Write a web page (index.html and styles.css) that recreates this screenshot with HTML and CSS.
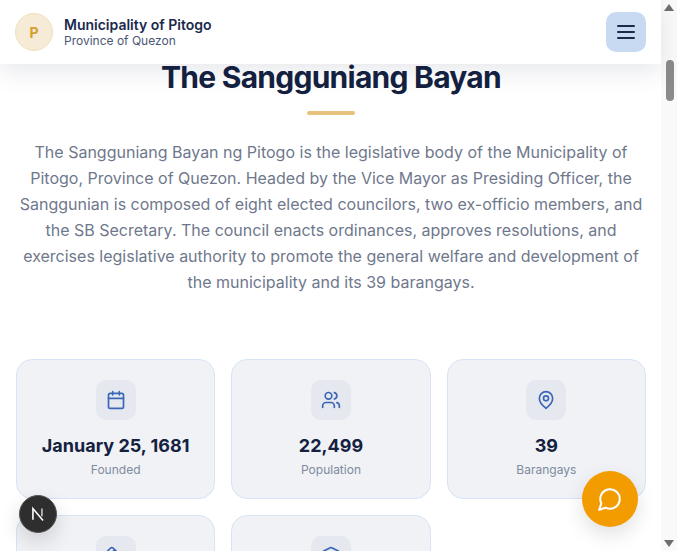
FILE: index.html
```html
<!DOCTYPE html>
<html lang="en">
<head>
<meta charset="utf-8">
<title>Municipality of Pitogo</title>
<link rel="stylesheet" href="styles.css">
</head>
<body>
<div class="viewport">
  <header class="topbar">
    <div class="brand">
      <div class="seal">P</div>
      <div class="brand-text">
        <div class="brand-name">Municipality of Pitogo</div>
        <div class="brand-sub">Province of Quezon</div>
      </div>
    </div>
    <button class="menu-btn" aria-label="Menu">
      <svg width="24" height="24" viewBox="0 0 24 24" fill="none" stroke="#1a2a4d" stroke-width="2" stroke-linecap="round"><path d="M4 6h16M4 12h16M4 18h16"/></svg>
    </button>
  </header>
  <main class="content">
    <h1 class="title">The Sangguniang Bayan</h1>
    <div class="rule"></div>
    <p class="intro">The Sangguniang Bayan ng Pitogo is the legislative body of the Municipality of Pitogo, Province of Quezon. Headed by the Vice Mayor as Presiding Officer, the Sanggunian is composed of eight elected councilors, two ex-officio members, and the SB Secretary. The council enacts ordinances, approves resolutions, and exercises legislative authority to promote the general welfare and development of the municipality and its 39 barangays.</p>
    <section class="stats">
      <article class="card">
        <div class="icon-box"><svg class="icon" viewBox="0 0 24 24"><path d="M8 2v4M16 2v4"/><rect x="3" y="4" width="18" height="18" rx="2"/><path d="M3 10h18"/></svg></div>
        <div class="value">January 25, 1681</div>
        <div class="label">Founded</div>
      </article>
      <article class="card">
        <div class="icon-box"><svg class="icon" viewBox="0 0 24 24"><path d="M16 21v-2a4 4 0 0 0-4-4H6a4 4 0 0 0-4 4v2"/><circle cx="9" cy="7" r="4"/><path d="M22 21v-2a4 4 0 0 0-3-3.87"/><path d="M16 3.13a4 4 0 0 1 0 7.75"/></svg></div>
        <div class="value">22,499</div>
        <div class="label">Population</div>
      </article>
      <article class="card">
        <div class="icon-box"><svg class="icon" viewBox="0 0 24 24"><path d="M20 10c0 6-8 12-8 12s-8-6-8-12a8 8 0 0 1 16 0Z"/><circle cx="12" cy="10" r="3"/></svg></div>
        <div class="value">39</div>
        <div class="label">Barangays</div>
      </article>
      <article class="card">
        <div class="icon-box"><svg class="icon" viewBox="0 0 24 24"><path d="M21.3 15.3a2.4 2.4 0 0 1 0 3.4l-2.6 2.6a2.4 2.4 0 0 1-3.4 0L2.7 8.7a2.41 2.41 0 0 1 0-3.4l2.6-2.6a2.41 2.41 0 0 1 3.4 0Z"/><path d="m14.5 12.5 2-2M11.5 9.5l2-2M8.5 6.5l2-2M17.5 15.5l2-2"/></svg></div>
      </article>
      <article class="card">
        <div class="icon-box"><svg class="icon" viewBox="0 0 24 24"><path d="M10 18v-7M14 18v-7M18 18v-7M6 18v-7M3 22h18"/><path d="M11.12 2.198a2 2 0 0 1 1.76.006l7.866 3.847c.476.233.31.949-.22.949H3.474c-.53 0-.695-.716-.22-.949z"/></svg></div>
      </article>
    </section>
  </main>
  <div class="scrollbar">
    <div class="arrow-up"></div>
    <div class="thumb"></div>
    <div class="arrow-down"></div>
  </div>
  <div class="next-badge">
    <svg width="18" height="18" viewBox="0 0 16 16" fill="none"><path d="M3.5 13V3.2L12.5 13.8" stroke="#fff" stroke-width="1.4"/><path d="M11.5 3v7" stroke="#c8c8c8" stroke-width="1.4"/></svg>
  </div>
  <button class="chat-btn" aria-label="Chat">
    <svg width="26" height="26" viewBox="0 0 24 24" fill="none" stroke="#fff" stroke-width="1.9" stroke-linecap="round" stroke-linejoin="round"><path d="M7.9 20A9 9 0 1 0 4 16.1L2 22Z"/></svg>
  </button>
</div>
</body>
</html>
```

FILE: styles.css
```css
* { box-sizing: border-box; }
html, body { margin: 0; padding: 0; height: 100%; overflow: hidden; }
body { font-family: Inter, "Liberation Sans", sans-serif; background: #fff; }
.viewport { position: relative; width: 677px; height: 551px; overflow: hidden; }

.topbar {
  position: absolute; top: 0; left: 0; width: 661px; height: 64px; z-index: 5;
  display: flex; align-items: center; justify-content: space-between;
  padding: 0 15px;
  background: #fff;
  box-shadow: 0 8px 24px rgba(26, 42, 77, 0.1);
}
.brand { display: flex; align-items: center; gap: 11px; }
.seal {
  width: 38px; height: 38px; border-radius: 50%;
  display: flex; align-items: center; justify-content: center;
  background: #f5ebd6; border: 1px solid #f0e0c0;
  color: #d69e2e; font-weight: 700; font-size: 14px;
}
.brand-name { font-size: 14px; font-weight: 600; color: #1a2a4d; line-height: 17px; }
.brand-sub { font-size: 12px; color: #4a5675; line-height: 16px; }
.menu-btn {
  width: 40px; height: 40px; border: 0; border-radius: 10px; padding: 0;
  background: #c8daf2; display: flex; align-items: center; justify-content: center;
}

.content { width: 661px; padding: 59px 15px 0 16px; }
.title {
  margin: 0; text-align: center; font-size: 30px; line-height: 36px; font-weight: 700;
  letter-spacing: -0.75px;
  color: #14213f;
}
.rule { width: 48px; height: 4px; margin: 16px auto 0; border-radius: 2px; background: #e8c27c; }
.intro {
  margin: 24px 0 0; padding: 0; text-align: center;
  font-size: 16px; line-height: 26px; color: #6f788c;
}
.stats {
  margin-top: 64px;
  display: grid; grid-template-columns: repeat(3, 1fr); gap: 16px;
}
.card {
  height: 140px; padding: 20px 16px 0; border-radius: 16px;
  background: #f0f2f6; border: 1px solid #d6e4f7;
  display: flex; flex-direction: column; align-items: center;
}
.icon-box {
  width: 40px; height: 40px; border-radius: 10px; background: #e5e8ee;
  display: flex; align-items: center; justify-content: center;
}
.icon { width: 20px; height: 20px; fill: none; stroke: #3b66b8; stroke-width: 2; stroke-linecap: round; stroke-linejoin: round; }
.value { margin-top: 14px; font-size: 18px; line-height: 24px; font-weight: 700; color: #14213f; white-space: nowrap; }
.label { margin-top: 4px; font-size: 12px; line-height: 16px; color: #7f8a9e; }

.scrollbar {
  position: absolute; top: 0; right: 0; width: 16px; height: 551px; background: #f9f9f9;
}
.arrow-up, .arrow-down { position: absolute; left: 3px; width: 0; height: 0; border-left: 5px solid transparent; border-right: 5px solid transparent; }
.arrow-up { top: 4px; border-bottom: 7px solid #6e6e6e; }
.arrow-down { bottom: 4px; border-top: 7px solid #6e6e6e; }
.thumb { position: absolute; left: 5px; top: 60px; width: 8px; height: 41px; border-radius: 4px; background: #8a8a8a; }

.next-badge {
  position: absolute; left: 19px; top: 495px; width: 38px; height: 38px; border-radius: 50%;
  background: #2e2e2e; border: 1px solid #555;
  display: flex; align-items: center; justify-content: center;
  box-shadow: 0 8px 20px rgba(0, 0, 0, 0.15);
  z-index: 6;
}
.chat-btn {
  position: absolute; left: 582px; top: 471px; width: 56px; height: 56px; border: 0; border-radius: 50%; padding: 0;
  background: #f39c00; display: flex; align-items: center; justify-content: center;
  box-shadow: 0 8px 20px rgba(0, 0, 0, 0.12);
  z-index: 6;
}
```
